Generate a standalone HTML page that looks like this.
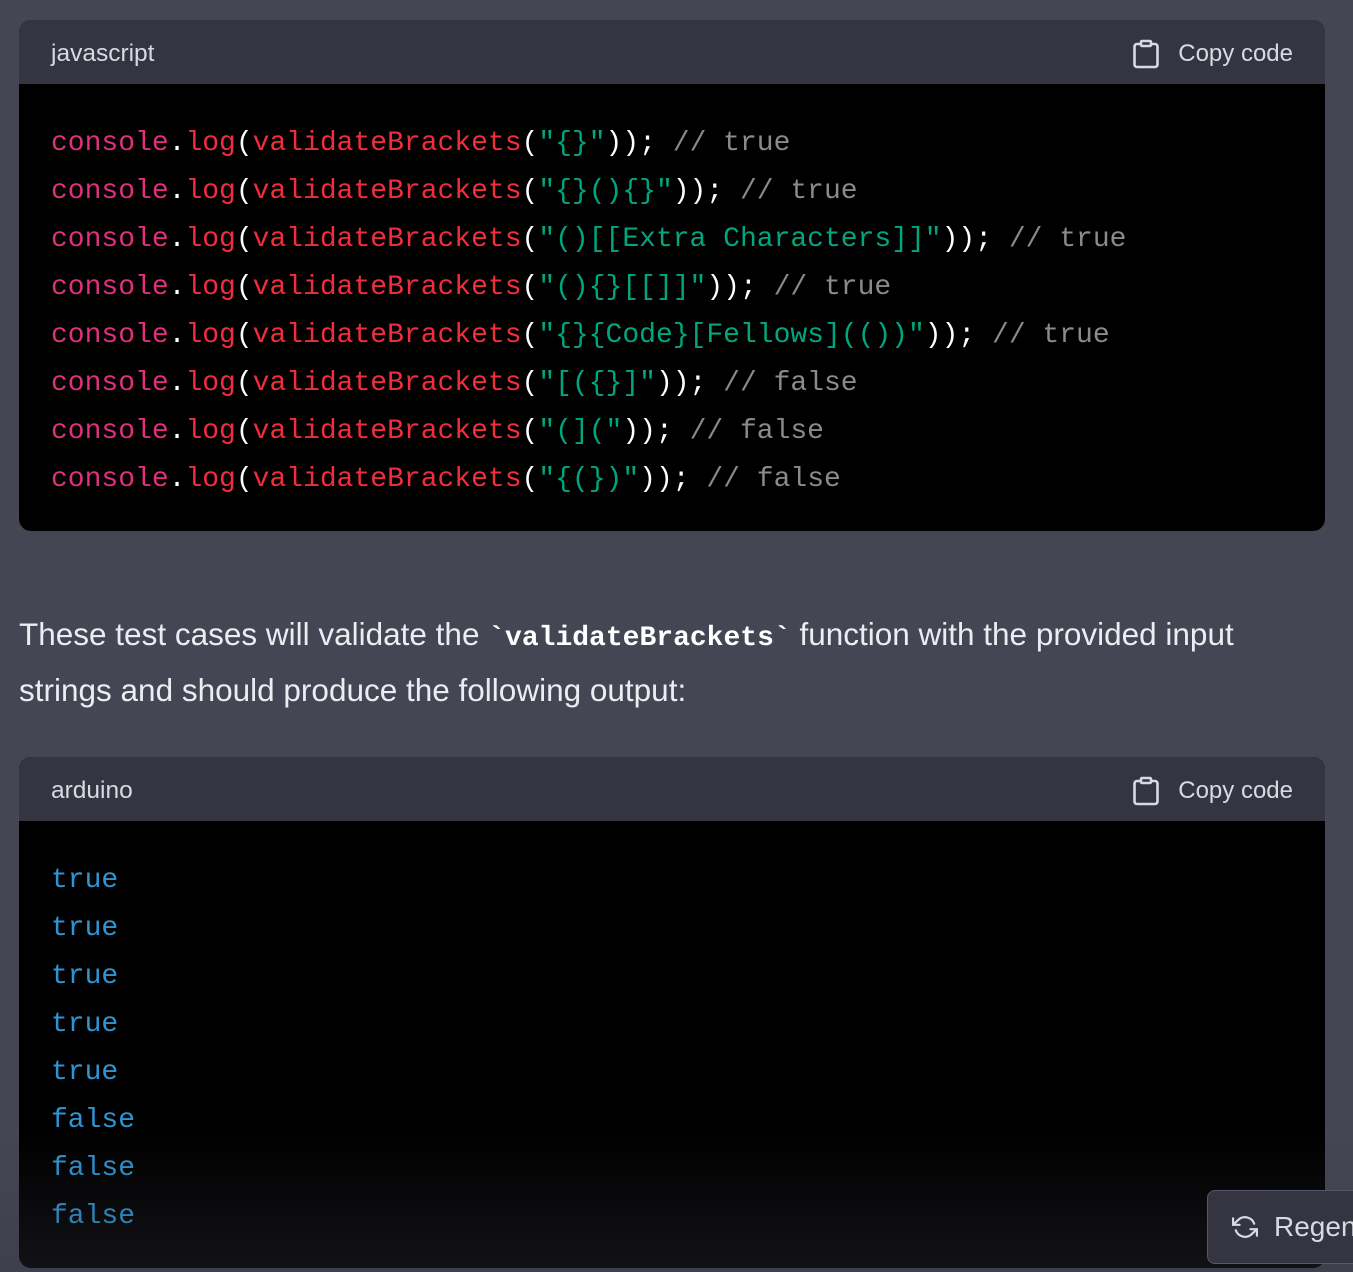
<!DOCTYPE html>
<html><head><meta charset="utf-8">
<style>
html,body{margin:0;padding:0;}
body{width:1353px;height:1272px;overflow:hidden;background:#444654;position:relative;font-family:"Liberation Sans",sans-serif;}
.blk{position:absolute;left:19px;width:1306px;background:#000;border-radius:12px;overflow:hidden;}
.hd{height:64px;background:#343541;color:#d9d9e3;font-size:24.5px;position:relative;}
.hd .l{position:absolute;left:32px;top:20px;}
.hd .r{position:absolute;right:32px;top:19px;display:flex;align-items:center;gap:18px;font-size:24px;}
pre{margin:0;padding:36px 32px 0 32px;font-family:"Liberation Mono",monospace;font-size:28px;line-height:48px;color:#fff;}
.k{color:#df3079}.f{color:#f22c3d}.s{color:#00a67d}.c{color:#8a8a8a}.b{color:#2e95d3}
p{position:absolute;left:19px;top:606px;width:1330px;margin:0;color:#ececf1;font-size:31.5px;line-height:56px;white-space:nowrap;}
code{font-family:"Liberation Mono",monospace;font-weight:bold;font-size:28px;color:#fff;line-height:1;}
.fade{position:absolute;left:0;top:1130px;width:1353px;height:142px;background:linear-gradient(rgba(52,53,65,0),rgba(52,53,65,0.35));}
.btn{position:absolute;left:1207px;top:1190px;width:220px;height:74px;box-sizing:border-box;border:1.5px solid #565869;border-radius:8px;background:#343541;color:#d9d9e3;font-size:28px;display:flex;align-items:center;padding-left:24px;gap:16px;white-space:nowrap;}
.btn svg{flex-shrink:0;}
</style></head><body>
<div class="blk" style="top:20px;height:511px;">
<div class="hd"><span class="l">javascript</span><span class="r"><svg width="28" height="30" viewBox="0 0 28 30" fill="none" stroke="#d9d9e3" stroke-width="2.6" stroke-linejoin="round"><rect x="2.5" y="5" width="23" height="23" rx="2.5"/><rect x="9" y="2" width="10" height="5" rx="1.2" fill="#343541"/></svg>Copy code</span></div>
<pre><span class="k">console</span>.<span class="f">log</span>(<span class="f">validateBrackets</span>(<span class="s">"{}"</span>)); <span class="c">// true</span>
<span class="k">console</span>.<span class="f">log</span>(<span class="f">validateBrackets</span>(<span class="s">"{}(){}"</span>)); <span class="c">// true</span>
<span class="k">console</span>.<span class="f">log</span>(<span class="f">validateBrackets</span>(<span class="s">"()[[Extra Characters]]"</span>)); <span class="c">// true</span>
<span class="k">console</span>.<span class="f">log</span>(<span class="f">validateBrackets</span>(<span class="s">"(){}[[]]"</span>)); <span class="c">// true</span>
<span class="k">console</span>.<span class="f">log</span>(<span class="f">validateBrackets</span>(<span class="s">"{}{Code}[Fellows](())"</span>)); <span class="c">// true</span>
<span class="k">console</span>.<span class="f">log</span>(<span class="f">validateBrackets</span>(<span class="s">"[({}]"</span>)); <span class="c">// false</span>
<span class="k">console</span>.<span class="f">log</span>(<span class="f">validateBrackets</span>(<span class="s">"(]("</span>)); <span class="c">// false</span>
<span class="k">console</span>.<span class="f">log</span>(<span class="f">validateBrackets</span>(<span class="s">"{(})"</span>)); <span class="c">// false</span></pre>
</div>
<p>These test cases will validate the <code>`validateBrackets`</code> function with the provided input<br>strings and should produce the following output:</p>
<div class="blk" style="top:757px;height:511px;">
<div class="hd"><span class="l">arduino</span><span class="r"><svg width="28" height="30" viewBox="0 0 28 30" fill="none" stroke="#d9d9e3" stroke-width="2.6" stroke-linejoin="round"><rect x="2.5" y="5" width="23" height="23" rx="2.5"/><rect x="9" y="2" width="10" height="5" rx="1.2" fill="#343541"/></svg>Copy code</span></div>
<pre><span class="b">true
true
true
true
true
false
false
false</span></pre>
</div>
<div class="fade"></div>
<div class="btn"><svg width="26" height="26" viewBox="0 0 24 24" fill="none" stroke="#d9d9e3" stroke-width="2" stroke-linecap="round" stroke-linejoin="round"><path d="M1 4v6h6"/><path d="M23 20v-6h-6"/><path d="M20.5 9A9 9 0 0 0 5.6 5.6L1 10m22 4-4.6 4.4A9 9 0 0 1 3.5 15"/></svg>Regenerate</div>
</body></html>
